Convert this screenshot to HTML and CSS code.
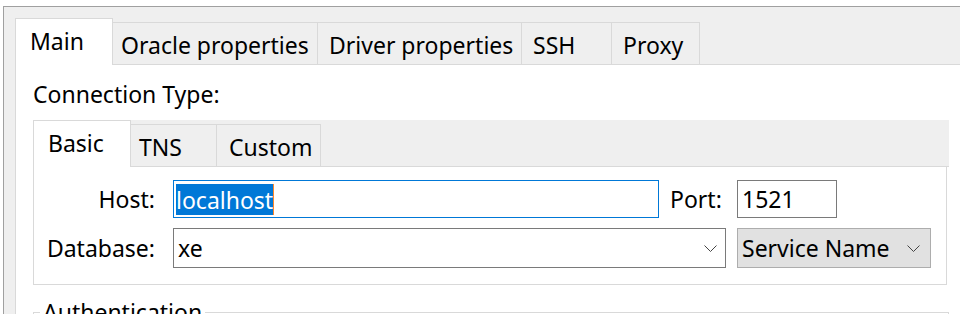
FILE: index.html
```html
<!DOCTYPE html>
<html lang="en">
<head>
	<meta charset="UTF-8">
	<title>Connection settings</title>
	<link rel="stylesheet" href="styles.css">
</head>
<body>
	<div class="window">
		<div class="tabbar">
			<div class="tab active w-main">Main</div>
			<div class="tab w-oracle">Oracle properties</div>
			<div class="tab w-driver">Driver properties</div>
			<div class="tab w-ssh">SSH</div>
			<div class="tab w-proxy">Proxy</div>
		</div>
		<div class="pane">
			<div class="caption">Connection Type:</div>
			<div class="conn">
				<div class="tabbar strip">
					<div class="tab active w-basic">Basic</div>
					<div class="tab w-tns">TNS</div>
					<div class="tab w-custom">Custom</div>
				</div>
				<div class="box">
					<div class="form">
						<label class="lbl">Host:</label>
						<div class="field focus"><span class="sel">localhost</span></div>
						<label class="lbl port-lbl">Port:</label>
						<div class="field port">1521</div>

						<label class="lbl">Database:</label>
						<div class="combo db">
							<span>xe</span>
							<svg width="13" height="7" viewBox="0 0 13 7"><polyline points="0.5,0.5 6.5,6.5 12.5,0.5" fill="none" stroke="#444" stroke-width="1"/></svg>
						</div>
						<div class="combo svc">
							<span>Service Name</span>
							<svg width="13" height="7" viewBox="0 0 13 7"><polyline points="0.5,0.5 6.5,6.5 12.5,0.5" fill="none" stroke="#444" stroke-width="1"/></svg>
						</div>
					</div>
				</div>
			</div>
			<fieldset class="group">
				<legend>Authentication</legend>
			</fieldset>
		</div>
	</div>
</body>
</html>
```

FILE: styles.css
```css
html,body{margin: 0;padding: 0;background: #fff;overflow: hidden;}
body{font: 23px/32px "Noto Sans", "Open Sans", sans-serif;color: #000;height: 314px;}

.window{margin: 6px 0 0 3px;padding: 11px 0 0 11px;border-top: 1px solid #a0a0a0;border-left: 1px solid #a0a0a0;background: #efefef;height: 400px;}

/* tab strips */
.tabbar{display: flex;align-items: flex-end;height: 46px;border-bottom: 1px solid #d9d9d9;}
.tab{box-sizing: border-box;height: 42px;padding: 6px 0 0 10px;line-height: 32px;border: 1px solid #d9d9d9;border-bottom: none;background: #efefef;white-space: nowrap;}
.tab + .tab{margin-left: -1px;}
.tab.active{height: 47px;margin-bottom: -1px;padding-left: 14px;background: #fff;}
.w-main{width: 98px;}
.w-oracle{width: 206px;padding-left: 8px;}
.w-driver{width: 205px;padding-left: 11px;}
.w-ssh{width: 91px;padding-left: 11px;}
.w-proxy{width: 89px;padding-left: 11px;}
.w-basic{width: 98px;}
.w-tns{width: 87px;padding-left: 8px;}
.w-custom{width: 105px;padding-left: 12px;}

.pane{background: #fff;border-left: 1px solid #d9d9d9;padding-left: 17px;height: 330px;}
.caption{padding-top: 13px;margin-bottom: 10px;}

.conn{width: 916px;}
.strip{background: #efefef;}
.box{margin-right: 2px;padding: 13px 0 16px;border: 1px solid #d9d9d9;border-top: none;}

/* connection form */
.form{display: grid;grid-template-columns: 139px 486px 78px 194px;grid-template-rows: 38px 40px;row-gap: 10px;}
.lbl{display: flex;align-items: center;justify-content: flex-end;padding-right: 18px;}
.port-lbl{justify-content: flex-start;padding: 0 0 0 11px;}
.field{box-sizing: border-box;border: 1px solid #7a7a7a;padding: 0 4px;line-height: 36px;white-space: nowrap;}
.field.focus{display: flex;align-items: center;padding: 2px;border-color: #0078d7;}
.sel{display: block;height: 31px;line-height: 33px;background: #0078d7;color: #fff;border-right: 1px solid #ff8728;}
.port{width: 100px;}

.combo{box-sizing: border-box;display: flex;align-items: center;justify-content: space-between;border: 1px solid #7a7a7a;padding: 0 8px 0 4px;line-height: 38px;white-space: nowrap;}
.combo svg{display: block;}
.db{grid-column: 2 / 4;margin-right: 11px;}
.svc{background: #e1e1e1;border-color: #adadad;padding-right: 10px;}

.group{width: 916px;box-sizing: border-box;margin: 12px 0 0;padding: 0 0 0 6px;border: 1px solid #d9d9d9;height: 60px;}
.group legend{padding: 0 3px;line-height: 30px;}
```
